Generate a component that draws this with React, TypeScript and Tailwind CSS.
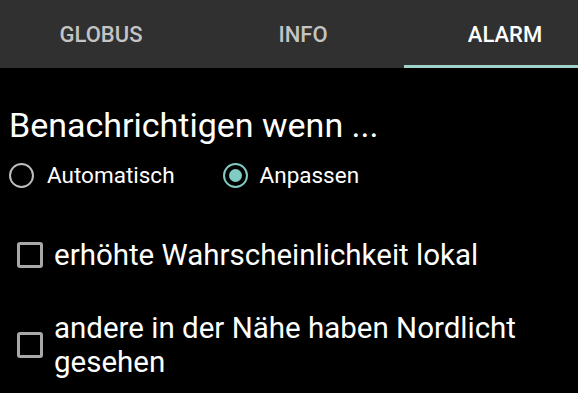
import { useState } from "react";

const tabs = ["GLOBUS", "INFO", "ALARM"];

const Radio = ({ checked }: { checked: boolean }) => (
  <span
    className={`flex h-[25px] w-[25px] shrink-0 items-center justify-center rounded-full border-[2.5px] ${
      checked ? "border-[#80cbc4]" : "border-[#bdbdbd]"
    }`}
  >
    {checked && <span className="h-[13px] w-[13px] rounded-full bg-[#80cbc4]" />}
  </span>
);

const Checkbox = () => (
  <span className="h-[26px] w-[26px] shrink-0 rounded-[3px] border-[3px] border-[#a8a8a8]" />
);

export default function App() {
  const [mode, setMode] = useState("custom");

  return (
    <div
      className="h-[393px] w-[578px] overflow-hidden bg-black text-white"
      style={{ fontFamily: "Roboto, 'Noto Sans', sans-serif" }}
    >
      {/* Tab bar */}
      <div className="flex h-[68px] overflow-hidden bg-[#303030]">
        {tabs.map((t) => (
          <div
            key={t}
            className={`flex w-[202px] shrink-0 items-center justify-center border-b-[3px] pt-[3px] text-[22px] font-medium ${
              t === "ALARM" ? "border-[#9fd3cb] text-white" : "border-transparent text-[#c4c4c4]"
            }`}
          >
            {t}
          </div>
        ))}
      </div>

      <div className="px-[9px]">
        <h1 className="mt-[38px] text-[34px] leading-[38px] font-normal">Benachrichtigen wenn ...</h1>

        {/* Radio group */}
        <div className="mt-[15px] flex items-center">
          <button className="flex items-center gap-[13px]" onClick={() => setMode("auto")}>
            <Radio checked={mode === "auto"} />
            <span className="text-[22.5px]">Automatisch</span>
          </button>
          <button className="ml-[48px] flex items-center gap-[12px]" onClick={() => setMode("custom")}>
            <Radio checked={mode === "custom"} />
            <span className="text-[22.5px]">Anpassen</span>
          </button>
        </div>

        {/* Checkboxes */}
        <div className="mt-[45px] flex items-center gap-[11px] pl-[8px]">
          <Checkbox />
          <span className="text-[29.5px] leading-[34px]">erhöhte Wahrscheinlichkeit lokal</span>
        </div>
        <div className="mt-[39px] flex items-center gap-[11px] pl-[8px]">
          <Checkbox />
          <span className="w-[500px] text-[29.5px] leading-[34px]">
            andere in der Nähe haben Nordlicht gesehen
          </span>
        </div>
      </div>
    </div>
  );
}
